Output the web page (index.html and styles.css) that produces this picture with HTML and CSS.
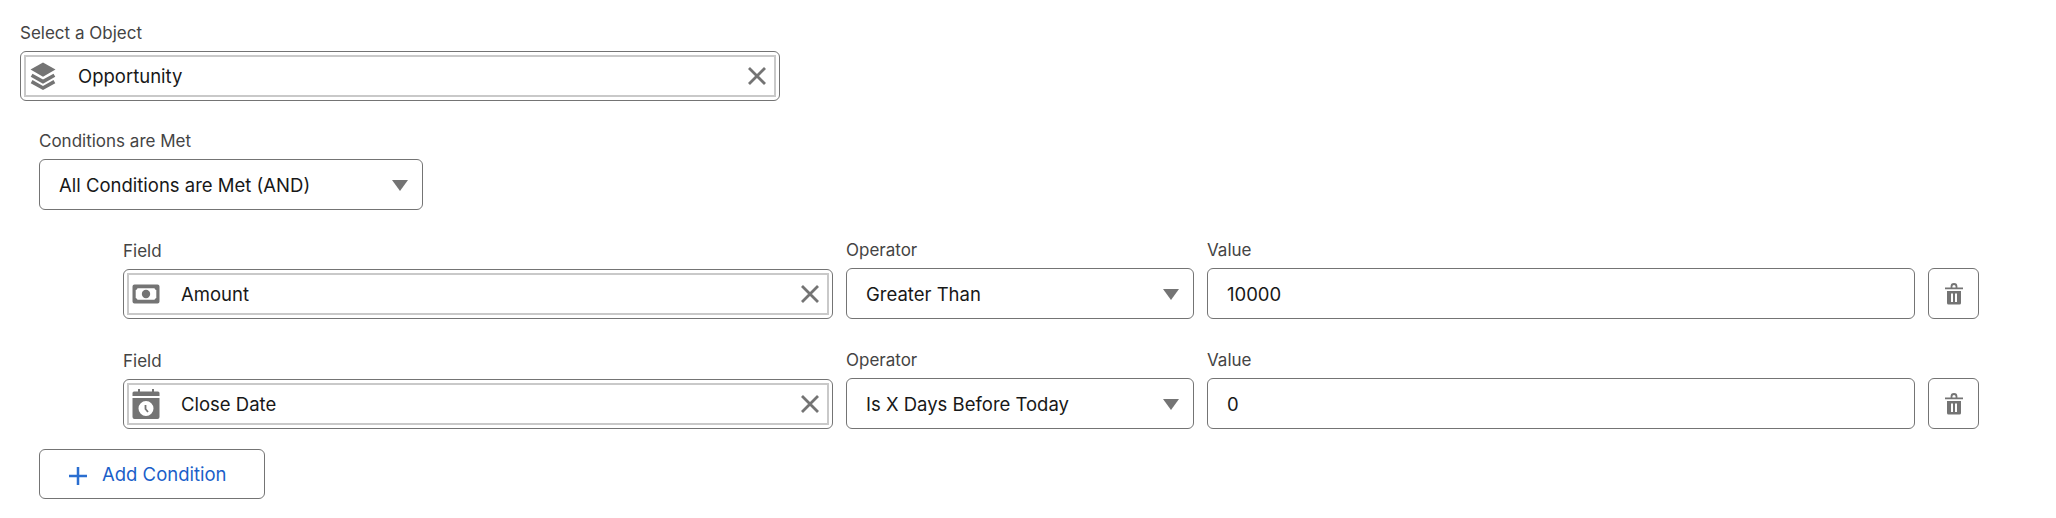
FILE: index.html
```html
<!DOCTYPE html>
<html lang="en">
<head>
<meta charset="utf-8">
<title>Conditions</title>
<link rel="stylesheet" href="styles.css">
</head>
<body>
<main class="page">
  <section class="object">
    <div class="label">Select a Object</div>
    <div class="lookup">
      <div class="lookup-inner">
        <svg class="icon-lead" width="30" height="30" viewBox="0 0 30 30"><path class="fill" d="M15 1.5 27.5 8.6 15 15.7 2.5 8.6z"/><path class="line" d="M3.6 14.2 15 20.6 26.4 14.2"/><path class="line" d="M3.6 20.6 15 27 26.4 20.6"/></svg>
        <span class="lookup-text">Opportunity</span>
        <svg class="icon-x" width="20" height="20" viewBox="0 0 20 20"><path d="M2 2 18 18M18 2 2 18"/></svg>
      </div>
    </div>
  </section>

  <section class="conditions">
    <div class="label">Conditions are Met</div>
    <div class="select logic">
      <span>All Conditions are Met (AND)</span>
      <span class="caret"></span>
    </div>

    <div class="rows">
      <div class="row">
        <div class="col col-field">
          <div class="label">Field</div>
          <div class="lookup">
            <div class="lookup-inner">
              <svg class="icon-lead" width="30" height="30" viewBox="0 0 30 30"><path class="fill" fill-rule="evenodd" d="M3.5 5.5h23A2 2 0 0 1 28.500 7.500v15a2 2 0 0 1-2 2h-23a2 2 0 0 1-2-2v-15a2 2 0 0 1 2-2zM6.500 9.200A2.500 2.500 0 0 1 4.700 11v8a2.500 2.500 0 0 1 1.800 1.800h17a2.500 2.500 0 0 1 1.800-1.800v-8a2.500 2.500 0 0 1-1.800-1.800z"/><circle class="fill" cx="15" cy="15" r="4.200"/></svg>
              <span class="lookup-text">Amount</span>
              <svg class="icon-x" width="20" height="20" viewBox="0 0 20 20"><path d="M2 2 18 18M18 2 2 18"/></svg>
            </div>
          </div>
        </div>
        <div class="col col-op">
          <div class="label">Operator</div>
          <div class="select"><span>Greater Than</span><span class="caret"></span></div>
        </div>
        <div class="col col-value">
          <div class="label">Value</div>
          <div class="input">10000</div>
        </div>
        <button class="icon-btn" type="button" aria-label="Delete">
          <svg width="18" height="22" viewBox="0 0 18 22"><path class="fill" d="M0 4.500h18v1.800H0zM2 8h14v12a1.500 1.500 0 0 1-1.500 1.500h-11A1.500 1.500 0 0 1 2 20zM6 10.500v8.500h2v-8.500zM10 10.500v8.500h2v-8.500z" fill-rule="evenodd"/><path class="line thin" d="M6.500 5V3.500A2.500 2.500 0 0 1 11.500 3.500V5"/></svg>
        </button>
      </div>

      <div class="row">
        <div class="col col-field">
          <div class="label">Field</div>
          <div class="lookup">
            <div class="lookup-inner">
              <svg class="icon-lead" width="30" height="30" viewBox="0 0 30 30"><path class="fill" d="M7 0h2v2.500h12V0h2v2.500h4a1.500 1.500 0 0 1 1.500 1.500v3h-27V4A1.500 1.500 0 0 1 3 2.500h4z"/><path class="fill" fill-rule="evenodd" d="M1.500 9h27v19a2 2 0 0 1-2 2h-23a2 2 0 0 1-2-2zM15 12a7.500 7.500 0 1 0 0 15 7.500 7.500 0 0 0 0-15z"/><path class="line thin" d="M14.500 16v4l2.500 3"/></svg>
              <span class="lookup-text">Close Date</span>
              <svg class="icon-x" width="20" height="20" viewBox="0 0 20 20"><path d="M2 2 18 18M18 2 2 18"/></svg>
            </div>
          </div>
        </div>
        <div class="col col-op">
          <div class="label">Operator</div>
          <div class="select"><span>Is X Days Before Today</span><span class="caret"></span></div>
        </div>
        <div class="col col-value">
          <div class="label">Value</div>
          <div class="input">0</div>
        </div>
        <button class="icon-btn" type="button" aria-label="Delete">
          <svg width="18" height="22" viewBox="0 0 18 22"><path class="fill" d="M0 4.500h18v1.800H0zM2 8h14v12a1.500 1.500 0 0 1-1.500 1.500h-11A1.500 1.500 0 0 1 2 20zM6 10.500v8.500h2v-8.500zM10 10.500v8.500h2v-8.500z" fill-rule="evenodd"/><path class="line thin" d="M6.500 5V3.500A2.500 2.500 0 0 1 11.500 3.500V5"/></svg>
        </button>
      </div>
    </div>

    <button class="add" type="button">
      <svg width="20" height="20" viewBox="0 0 20 20"><path d="M10 1V19M1 10H19"/></svg>
      <span>Add Condition</span>
    </button>
  </section>
</main>
</body>
</html>
```
FILE: styles.css
```css
* { box-sizing: border-box; }
html, body { margin: 0; padding: 0; background: #fff; }
body { font-family: Inter, "Liberation Sans", sans-serif; color: #181818; }
.page { padding: 21px 77px 0 20px; width: 2056px; height: 518px; overflow: hidden; }
.label { height: 24px; line-height: 24px; margin-bottom: 6px; font-size: 17px; color: #444; }
.object { width: 760px; }
.lookup { height: 50px; border: 1.5px solid #747474; border-radius: 6px; padding: 3px; background: #fff; }
.lookup-inner { height: 100%; display: flex; align-items: center; border: 2.5px solid #c9c9c9; padding: 0 7px 0 2px; }
.icon-lead { flex: none; margin-right: 20px; }
.lookup-text { flex: 1; font-size: 18.500px; }
.icon-x { flex: none; }
.icon-x path { stroke: #747474; stroke-width: 2.800; fill: none; }
.fill { fill: #747474; }
.line { fill: none; stroke: #747474; stroke-width: 3.600; }
.line.thin { stroke-width: 1.800; }
.conditions { margin-top: 28px; padding-left: 19px; }
.select { height: 51px; display: flex; align-items: center; justify-content: space-between; border: 1.5px solid #747474; border-radius: 6px; padding: 0 14px 0 19px; font-size: 18.500px; background: #fff; }
.logic { width: 384px; }
.caret { width: 0; height: 0; border-left: 8.500px solid transparent; border-right: 8.500px solid transparent; border-top: 11px solid #747474; margin-top: 2px; }
.rows { margin: 28px 0 0 84px; display: flex; flex-direction: column; gap: 29px; }
.row { display: flex; gap: 13px; align-items: flex-end; }
.col-field { width: 710px; flex: none; }
.col-op { width: 348px; flex: none; }
.col-value { flex: 1; }
.input { height: 51px; display: flex; align-items: center; border: 1.5px solid #747474; border-radius: 6px; padding: 0 19px; font-size: 18.500px; }
.icon-btn { width: 51px; height: 51px; flex: none; display: flex; align-items: center; justify-content: center; border: 1.5px solid #747474; border-radius: 6px; background: #fff; padding: 0; }
.add { margin-top: 20px; width: 226px; height: 50px; display: flex; align-items: center; gap: 14px; padding: 0 0 0 28px; border: 1.5px solid #747474; border-radius: 6px; background: #fff; color: #1b5fc9; font: 18.500px Inter, "Liberation Sans", sans-serif; }
.add svg { flex: none; margin-top: 3px; }
.add path { stroke: #2a6ed0; stroke-width: 2.500; fill: none; }
```
